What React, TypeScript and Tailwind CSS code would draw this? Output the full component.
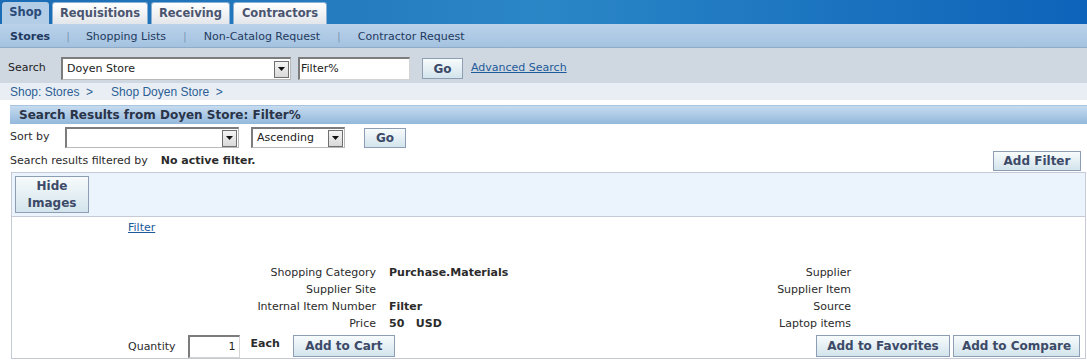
import React from "react";

const font = "font-['DejaVu_Sans',Tahoma,sans-serif]";

function Btn({ children, className = "" }: { children: React.ReactNode; className?: string }) {
  return (
    <button
      className={`border border-[#8d9db3] bg-gradient-to-b from-[#f7fbfc] to-[#d3e4ec] text-[#3c4a68] font-bold text-[12px] ${className}`}
    >
      {children}
    </button>
  );
}

function Select({ value, className = "" }: { value: string; className?: string }) {
  return (
    <div
      className={`flex items-center bg-white border border-[#b9b9b9] border-t-[#7c7c7c] border-l-[#7c7c7c] border-t-2 border-l-2 ${className}`}
    >
      <span className="flex-1 pl-[4px] text-[11px] text-[#222] truncate">{value}</span>
      <span className="flex items-center justify-center w-[15px] h-[17px] mr-[1px] border border-[#6f6f6f] bg-gradient-to-b from-[#f4f4f4] to-[#d9d9d9]">
        <svg width="7" height="4" viewBox="0 0 7 4">
          <path d="M0 0h7L3.5 4z" fill="#111" />
        </svg>
      </span>
    </div>
  );
}

function Field({ value, className = "" }: { value: string; className?: string }) {
  return (
    <div
      className={`flex items-center bg-white border border-[#d4d4d4] border-t-[#7c7c7c] border-l-[#7c7c7c] border-t-2 border-l-2 text-[11px] text-[#222] ${className}`}
    >
      {value}
    </div>
  );
}

const tabs = [
  ["Requisitions", "w-[96px]"],
  ["Receiving", "w-[79px]"],
  ["Contractors", "w-[94px]"],
];

const leftRows = [
  ["Shopping Category", "Purchase.Materials"],
  ["Supplier Site", ""],
  ["Internal Item Number", "Filter"],
  ["Price", "50   USD"],
];
const rightRows = ["Supplier", "Supplier Item", "Source", "Laptop items"];

export default function App() {
  return (
    <div className={`w-[1087px] h-[361px] bg-white overflow-hidden ${font} text-[11px] text-[#2b2b2b]`}>
      {/* tabs */}
      <div className="h-[24px] flex items-end gap-[3px] pl-[2px] bg-gradient-to-r from-[#1a6cb4] via-[#2b86c6] to-[#0d63b9]">
        <div className="w-[47px] h-[22px] flex items-center justify-center rounded-t-[3px] bg-[#b3cde6] text-[#2a4a78] font-bold text-[11.5px]">
          Shop
        </div>
        {tabs.map(([t, w]) => (
          <div
            key={t}
            className={`${w} h-[22px] flex items-center justify-center rounded-t-[3px] bg-gradient-to-b from-[#ffffff] to-[#e3e6ea] border border-b-0 border-[#8cb0d4] text-[#4b5570] font-bold text-[11.5px]`}
          >
            {t}
          </div>
        ))}
      </div>

      {/* subnav */}
      <div className="h-[24px] flex items-center pl-[10px] pt-[3px] bg-gradient-to-b from-[#bad2ea] to-[#a4c2e0] border-b border-[#8eabc8] text-[#1f3a60] text-[11px]">
        <span className="font-bold">Stores</span>
        <span className="mx-[16px] text-[#7f99b6]">|</span>
        <span>Shopping Lists</span>
        <span className="mx-[17px] text-[#7f99b6]">|</span>
        <span>Non-Catalog Request</span>
        <span className="mx-[17px] text-[#7f99b6]">|</span>
        <span>Contractor Request</span>
      </div>

      {/* search */}
      <div className="h-[35px] flex items-center pl-[8px] pt-[6px] bg-[#cfd8e0]">
        <span className="w-[53px] text-[#222]">Search</span>
        <Select value="Doyen Store" className="w-[230px] h-[23px]" />
        <Field value="Filter%" className="ml-[7px] w-[112px] h-[23px] pl-[1px]" />
        <Btn className="ml-[12px] w-[41px] h-[21px] leading-none">Go</Btn>
        <a className="ml-[8px] text-[#1d5a9a] underline">Advanced Search</a>
      </div>

      {/* breadcrumb */}
      <div className="h-[17px] flex items-center pl-[10px] bg-[#e9eef5] text-[#2c5f94] font-['Liberation_Sans',Arial,sans-serif] text-[12px]">
        <span>Shop: Stores&nbsp;&nbsp;&gt;</span>
        <span className="ml-[18px]">Shop Doyen Store&nbsp;&nbsp;&gt;</span>
      </div>

      {/* results header */}
      <div className="mt-[5px] ml-[10px] h-[19px] flex items-center pl-[9px] bg-gradient-to-b from-[#c6dbef] to-[#93b8dc] border-t border-[#a9c4de] text-[#2a3448] font-bold text-[12px]">
        Search Results from Doyen Store: Filter%
      </div>

      {/* sort */}
      <div className="h-[25px] flex items-center pl-[10px] mt-[1px]">
        <span className="w-[55px]">Sort by</span>
        <Select value="" className="w-[174px] h-[21px]" />
        <Select value="Ascending" className="ml-[12px] w-[94px] h-[21px]" />
        <Btn className="ml-[19px] w-[42px] h-[20px] leading-none">Go</Btn>
      </div>

      {/* filter line */}
      <div className="h-[22px] flex items-center pl-[10px] pr-[6px]">
        <span>Search results filtered by</span>
        <span className="ml-[13px] font-bold">No active filter.</span>
        <Btn className="ml-auto w-[88px] h-[20px] leading-none">Add Filter</Btn>
      </div>

      {/* panel */}
      <div className="ml-[11px] w-[1075px] h-[187px] border border-[#c5cad5] flex flex-col">
        <div className="h-[44px] bg-[#ebf3fc] border-b border-[#c5cad5] flex items-center pl-[3px]">
          <Btn className="w-[74px] h-[37px] leading-[17px]">
            Hide
            <br />
            Images
          </Btn>
        </div>
        <div className="flex-1 flex flex-col">
          <a className="ml-[116px] mt-[3px] text-[#1d5a9a] underline">Filter</a>
          <div className="mt-[27px] flex">
            <div className="w-[364px] flex flex-col items-end">
              {leftRows.map(([l]) => (
                <div key={l} className="h-[17.34px] leading-[17px]">{l}</div>
              ))}
            </div>
            <div className="ml-[13px] w-[340px] flex flex-col">
              {leftRows.map(([l, v]) => (
                <div key={l} className="h-[17.34px] leading-[17px] font-bold whitespace-pre">{v}</div>
              ))}
            </div>
            <div className="w-[122px] flex flex-col items-end">
              {rightRows.map((r) => (
                <div key={r} className="h-[17.34px] leading-[17px]">{r}</div>
              ))}
            </div>
          </div>
          <div className="mt-auto flex items-end pl-[116px] pr-[5px]">
            <span className="mb-[3px]">Quantity</span>
            <Field value="1" className="ml-[12px] w-[52px] h-[23px] justify-end pr-[3px]" />
            <span className="ml-[11px] mb-[6px] font-bold">Each</span>
            <Btn className="ml-[13px] w-[102px] h-[22px] mb-[1px] leading-none">Add to Cart</Btn>
            <Btn className="ml-auto w-[134px] h-[22px] mb-[1px] leading-none">Add to Favorites</Btn>
            <Btn className="ml-[3px] w-[127px] h-[22px] mb-[1px] leading-none">Add to Compare</Btn>
          </div>
        </div>
      </div>
    </div>
  );
}
